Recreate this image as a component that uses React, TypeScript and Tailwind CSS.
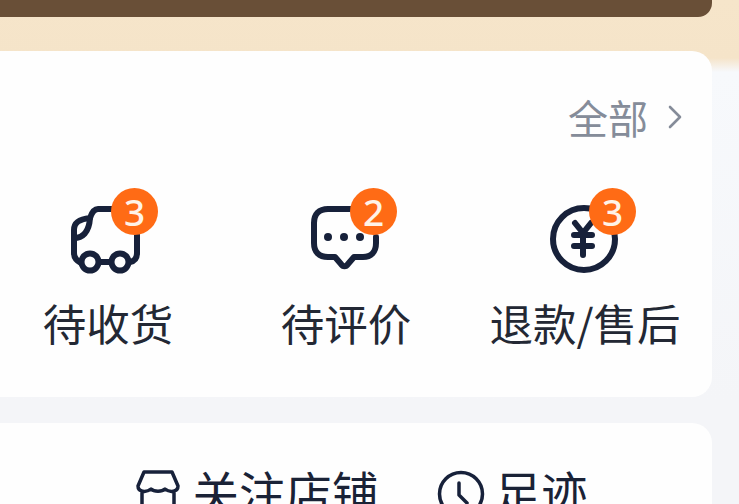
const font = "[font-family:'Noto_Sans_CJK_SC','Noto_Sans',sans-serif]";

const Badge = ({ count, className }: { count: number; className: string }) => (
  <span className={`absolute -top-[17px] flex h-[47px] w-[47px] items-center justify-center rounded-full bg-[#ff6b15] text-[37px] font-medium leading-none text-[#fff3e8] [font-family:'Noto_Sans',sans-serif] ${className}`}>
    {count}
  </span>
);

const TruckIcon = () => (
  <svg width="72" height="70" viewBox="0 0 72 70" fill="none" stroke="#17213a" strokeWidth="6" strokeLinecap="round" strokeLinejoin="round">
    <path d="M41 4H27C23 4 21 7 19 13C9 14 3 17 3 25V48C3 53 6 56 10 58" />
    <path d="M3 33C11 33 18 28 19 13" />
    <path d="M66 30V48C66 53 64 56 59 57" />
    <path d="M28 57H40" />
    <circle cx="19" cy="57" r="8.500" />
    <circle cx="49" cy="57" r="8.500" />
  </svg>
);

const ChatIcon = () => (
  <svg width="72" height="70" viewBox="0 0 72 70" fill="none" stroke="#17213a" strokeWidth="6" strokeLinecap="round" strokeLinejoin="round">
    <path d="M46 4H19C10 4 5 9 5 18V38C5 47 10 52 19 52H26L32 59C34 62 37 62 39 59L45 52H54C62 52 67 47 67 38V32" />
    <circle cx="19" cy="32" r="4" fill="#17213a" stroke="none" />
    <circle cx="35" cy="32" r="4" fill="#17213a" stroke="none" />
    <circle cx="51" cy="32" r="4" fill="#17213a" stroke="none" />
  </svg>
);

const YenIcon = () => (
  <svg width="72" height="70" viewBox="0 0 72 70" fill="none" stroke="#17213a" strokeWidth="6" strokeLinecap="round" strokeLinejoin="round">
    <circle cx="36" cy="34" r="31" />
    <path d="M27 18L35 28L43 18M35 28V50M26 30H44M26 41H44" />
  </svg>
);

const items = [
  { label: "待收货", count: 3, icon: <TruckIcon />, badge: "left-[40px]" },
  { label: "待评价", count: 2, icon: <ChatIcon />, badge: "left-[41px]" },
  { label: "退款/售后", count: 3, icon: <YenIcon />, badge: "left-[41px]" },
];

export default function App() {
  return (
    <div className={`h-[504px] w-[739px] overflow-hidden bg-[linear-gradient(180deg,#f6e5ca_0px,#f5e4c9_58px,#f7f9fc_72px,#f4f5f8_400px)] pr-[27px] ${font}`}>
      <div className="h-[17px] rounded-br-[14px] bg-[#694f37]" />

      <section className="mt-[34px] h-[346px] rounded-r-[20px] bg-[#fefefe]">
        <div className="flex h-[154px] items-start justify-end pr-[29px] pt-[37px]">
          <span className="text-[40px] leading-[58px] text-[#858c99]">全部</span>
          <svg className="ml-[19px] mt-[17px]" width="16" height="24" viewBox="0 0 16 24" fill="none" stroke="#858c99" strokeWidth="2.600" strokeLinecap="round" strokeLinejoin="round">
            <path d="M3 2L13 12L3 22" />
          </svg>
        </div>

        <div className="grid grid-cols-[216px_260px_218px]">
          {items.map((item) => (
            <div key={item.label} className="flex flex-col items-center">
              <div className="relative h-[70px] w-[72px] -translate-x-px">
                {item.icon}
                <Badge count={item.count} className={item.badge} />
              </div>
              <span className="mt-[17px] whitespace-nowrap text-[43.500px] leading-[62px] text-[#232834]">{item.label}</span>
            </div>
          ))}
        </div>
      </section>

      <section className="mt-[26px] flex h-[120px] justify-center gap-[58px] rounded-r-[20px] bg-[#fefefe] pl-[10px] pt-[35px] text-[46.500px] leading-[66px] text-[#1a2236]">
        <div className="flex items-start gap-[12px]">
          <svg className="mt-[11px]" width="46" height="50" viewBox="0 0 46 50" fill="none" stroke="#17213a" strokeWidth="3.500" strokeLinecap="round" strokeLinejoin="round">
            <path d="M9 3H37L43 17C43 23 35 24 30 20C27 23 19 23 16 20C11 24 3 23 3 17Z" />
            <path d="M7 24V50M39 24V50" />
          </svg>
          <span>关注店铺</span>
        </div>
        <div className="flex items-start gap-[10px]">
          <svg className="mt-[11px]" width="48" height="50" viewBox="0 0 48 50" fill="none" stroke="#17213a" strokeWidth="3.500" strokeLinecap="round" strokeLinejoin="round">
            <circle cx="24" cy="25" r="21.500" />
            <path d="M22 14V26L30 34" />
          </svg>
          <span>足迹</span>
        </div>
      </section>
    </div>
  );
}
